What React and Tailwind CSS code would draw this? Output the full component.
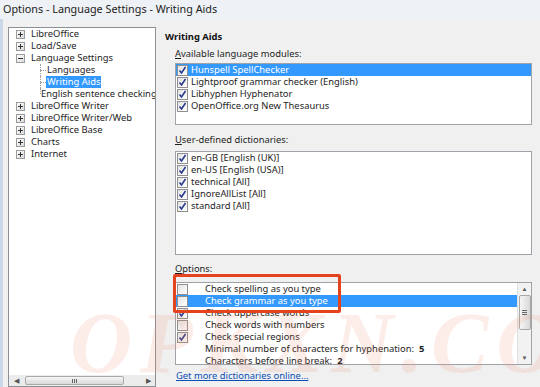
const font = { fontFamily: '"Noto Sans", "Open Sans", sans-serif' };

function Check({ checked }) {
  return (
    <span className="inline-flex w-[11px] h-[11px] shrink-0 border border-[#8f8f8f] bg-gradient-to-br from-[#e3e3e3] to-[#ffffff] items-center justify-center">
      {checked && (
        <svg width="9" height="9" viewBox="0 0 9 9">
          <path d="M1.5 4.5 L3.5 7 L7.5 1" fill="none" stroke="#2a3a8c" strokeWidth="1.6" />
        </svg>
      )}
    </span>
  );
}

function Expander({ open }) {
  return (
    <span className="inline-flex w-[9px] h-[9px] border border-[#9a9a9a] bg-gradient-to-br from-white to-[#dcdcdc] items-center justify-center">
      <svg width="7" height="7" viewBox="0 0 7 7">
        <path d="M1 3.5 H6" stroke="#333" strokeWidth="1" />
        {!open && <path d="M3.5 1 V6" stroke="#333" strokeWidth="1" />}
      </svg>
    </span>
  );
}

const tree = [
  { label: 'LibreOffice', kind: 'plus' },
  { label: 'Load/Save', kind: 'plus' },
  { label: 'Language Settings', kind: 'minus' },
  { label: 'Languages', kind: 'child' },
  { label: 'Writing Aids', kind: 'child', selected: true },
  { label: 'English sentence checking', kind: 'child', last: true },
  { label: 'LibreOffice Writer', kind: 'plus' },
  { label: 'LibreOffice Writer/Web', kind: 'plus' },
  { label: 'LibreOffice Base', kind: 'plus' },
  { label: 'Charts', kind: 'plus' },
  { label: 'Internet', kind: 'plus' },
];

const modules = [
  'Hunspell SpellChecker',
  'Lightproof grammar checker (English)',
  'Libhyphen Hyphenator',
  'OpenOffice.org New Thesaurus',
];

const dicts = ['en-GB [English (UK)]', 'en-US [English (USA)]', 'technical [All]', 'IgnoreAllList [All]', 'standard [All]'];

const options = [
  { label: 'Check spelling as you type', box: true, checked: false },
  { label: 'Check grammar as you type', box: true, checked: false, selected: true },
  { label: 'Check uppercase words', box: true, checked: true },
  { label: 'Check words with numbers', box: true, checked: false },
  { label: 'Check special regions', box: true, checked: true },
  { label: 'Minimal number of characters for hyphenation:', value: '5' },
  { label: 'Characters before line break:', value: '2' },
];

function TreeRow({ item }) {
  if (item.kind === 'child') {
    return (
      <div className="h-[12px] flex items-center relative pl-[31px]">
        <span className={`absolute left-[31px] top-0 border-l border-dotted border-[#a0a0a0] ${item.last ? 'h-[6px]' : 'h-[12px]'}`} />
        <span className="w-[6px] border-t border-dotted border-[#a0a0a0]" />
        <span className={`px-[1px] leading-[12px] whitespace-nowrap ${item.selected ? 'bg-[#3399ff] text-white' : 'text-[#1e1e1e]'}`}>{item.label}</span>
      </div>
    );
  }
  return (
    <div className="h-[12px] flex items-center pl-[7px] gap-[6px]">
      <Expander open={item.kind === 'minus'} />
      <span className="leading-[12px] whitespace-nowrap text-[#1e1e1e]">{item.label}</span>
    </div>
  );
}

export default function App() {
  return (
    <div className="w-[540px] h-[387px] bg-[#f0f0f0] overflow-hidden relative text-[9.4px] text-[#1e1e1e]" style={font}>
      <div className="h-[19px] bg-[#eef1f5] flex items-center pl-[3px] text-[10.8px] text-[#222]">
        Options - Language Settings - Writing Aids
      </div>
      <div className="flex h-[368px] border-l-[3px] border-[#c9d7e8]">
        <div className="ml-[5px] mt-[8px] w-[148px] bg-white border border-[#8b8f96] flex flex-col overflow-hidden">
          <div className="flex-1 overflow-hidden">
            {tree.map((t) => (
              <TreeRow key={t.label} item={t} />
            ))}
          </div>
          <div className="h-[11px] bg-[#ececec] flex items-center text-[#555]">
            <span className="w-[8px] text-center text-[7px] leading-none ml-[3px]">◀</span>
            <div className="ml-[5px] w-[99px] h-[9px] border border-[#a9a9a9] rounded-[2px] bg-gradient-to-b from-[#f6f6f6] to-[#d8d8d8] flex items-center justify-center">
              <span className="flex gap-[1px]">
                <span className="w-[1px] h-[4px] bg-[#666]" />
                <span className="w-[1px] h-[4px] bg-[#666]" />
                <span className="w-[1px] h-[4px] bg-[#666]" />
              </span>
            </div>
            <span className="ml-auto mr-[4px] text-[7px] leading-none">▶</span>
          </div>
        </div>

        <div className="ml-[9px] mt-[8px] flex flex-col">
          <div className="mt-[3px] h-[14px] leading-[14px] font-bold text-[9.4px] text-[#111]">Writing Aids</div>
          <div className="ml-[10px] flex flex-col">
            <div className="mt-[3px] h-[14px] leading-[14px]">
              <span className="underline">A</span>vailable language modules:
            </div>
            <div className="mt-[2px] w-[357px] h-[62px] bg-white border border-[#9ea3aa] flex flex-col">
              {modules.map((m, i) => (
                <div key={m} className={`h-[12px] flex items-center gap-[3px] pl-[1px] ${i === 0 ? 'bg-[#3399ff] text-white' : ''}`}>
                  <Check checked />
                  <span className="leading-[12px] whitespace-nowrap">{m}</span>
                </div>
              ))}
            </div>

            <div className="mt-[8px] h-[14px] leading-[14px]">
              <span className="underline">U</span>ser-defined dictionaries:
            </div>
            <div className="mt-[4px] w-[357px] h-[104px] bg-white border border-[#9ea3aa] flex flex-col">
              {dicts.map((d) => (
                <div key={d} className="h-[12px] flex items-center gap-[3px] pl-[1px]">
                  <Check checked />
                  <span className="leading-[12px] whitespace-nowrap">{d}</span>
                </div>
              ))}
            </div>

            <div className="mt-[7px] h-[14px] leading-[14px]">
              <span className="underline">O</span>ptions:
            </div>
            <div className="mt-[6px] w-[357px] h-[83px] bg-white border border-[#9ea3aa] flex">
              <div className="flex-1 flex flex-col">
                {options.map((o) => (
                  <div key={o.label} className={`h-[12px] flex items-center pl-[1px] ${o.selected ? 'bg-[#3399ff] text-white' : ''}`}>
                    <span className="w-[28px] flex">{o.box && <Check checked={o.checked} />}</span>
                    <span className="leading-[12px] whitespace-nowrap">{o.label}</span>
                    {o.value && <span className="ml-[5px] font-bold leading-[12px]">{o.value}</span>}
                  </div>
                ))}
              </div>
              <div className="w-[14px] bg-[#f2f2f2] border-l border-[#e0e0e0] flex flex-col items-center text-[#555]">
                <span className="text-[6px] leading-none mt-[3px]">▲</span>
                <div className="mt-[3px] w-[12px] h-[35px] border border-[#a9a9a9] rounded-[2px] bg-gradient-to-r from-[#f6f6f6] to-[#d8d8d8] flex flex-col items-center justify-center gap-[1px]">
                  <span className="w-[5px] h-[1px] bg-[#666]" />
                  <span className="w-[5px] h-[1px] bg-[#666]" />
                  <span className="w-[5px] h-[1px] bg-[#666]" />
                </div>
                <span className="text-[6px] leading-none mt-auto mb-[3px]">▼</span>
              </div>
            </div>

            <div className="mt-[4px] h-[14px] leading-[14px] pl-[1px]">
              <span className="text-[#0a4fb8] underline">Get more dictionaries online...</span>
            </div>
          </div>
        </div>
      </div>

      <div className="absolute left-[173px] top-[274px] w-[168px] h-[39px] border-[3px] border-[#e5431d] rounded-[2px]" />
      <div
        className="absolute left-[70px] top-[300px] text-[86px] italic font-bold leading-none tracking-[8px] text-[#f08a70] opacity-15 pointer-events-none whitespace-nowrap"
        style={{ fontFamily: '"Liberation Serif", serif' }}
      >
        OPKXN.COM
      </div>
    </div>
  );
}
